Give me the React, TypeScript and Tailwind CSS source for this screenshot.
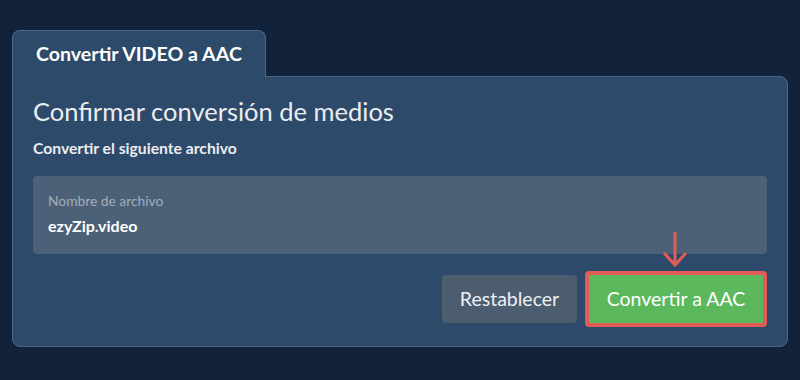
export default function App() {
  return (
    <div
      className="min-h-[380px] w-[800px] bg-[#11223a] pl-[12px] pt-[30px]"
      style={{ fontFamily: 'Lato, "Open Sans", sans-serif' }}
    >
      {/* Tab */}
      <div className="relative z-10 -mb-px inline-flex h-[47px] w-[254px] items-center rounded-t-[8px] border border-b-0 border-[#4b6887] bg-[#2d4a6a] pl-[23px]">
        <span className="text-[19.6px] font-bold text-white">Convertir VIDEO a AAC</span>
      </div>

      {/* Panel */}
      <div className="w-[776px] rounded-b-[8px] rounded-tr-[8px] border border-[#4b6887] bg-[#2d4a6a] px-[20px] pb-[19px] pt-[18px]">
        <h2 className="text-[25.5px] leading-[32px] text-[#ebedf0]">Confirmar conversión de medios</h2>
        <p className="mt-[12px] text-[15.7px] font-bold leading-[18px] text-[#ebedf0]">
          Convertir el siguiente archivo
        </p>

        <div className="mt-[19px] h-[78px] rounded-[4px] bg-[#4c6178] px-[15px] pt-[16px]">
          <div className="text-[13.8px] leading-[18px] text-[#a3adb9]">Nombre de archivo</div>
          <div className="mt-[6px] text-[16px] font-bold leading-[20px] text-white">ezyZip.video</div>
        </div>

        <div className="mt-[17px] flex items-center justify-end gap-[8px]">
          <button className="h-[48px] w-[135px] rounded-[4px] bg-[#4c5d70] text-[19.5px] text-[#eef0f2]">
            Restablecer
          </button>
          <div className="relative">
            <svg
              className="absolute left-[77px] top-[-39px]"
              width="30"
              height="38"
              viewBox="0 0 30 38"
              fill="none"
            >
              <path d="M13 0 V34" stroke="#e05d57" strokeWidth="3" />
              <path d="M2 21 L13 33 L24 21" stroke="#e05d57" strokeWidth="3" strokeLinejoin="miter" />
            </svg>
            <button className="h-[56px] w-[182px] rounded-[4px] border-[4px] border-[#e05d57] bg-[#5cb85c] text-[19.5px] text-white">
              Convertir a AAC
            </button>
          </div>
        </div>
      </div>
    </div>
  )
}
